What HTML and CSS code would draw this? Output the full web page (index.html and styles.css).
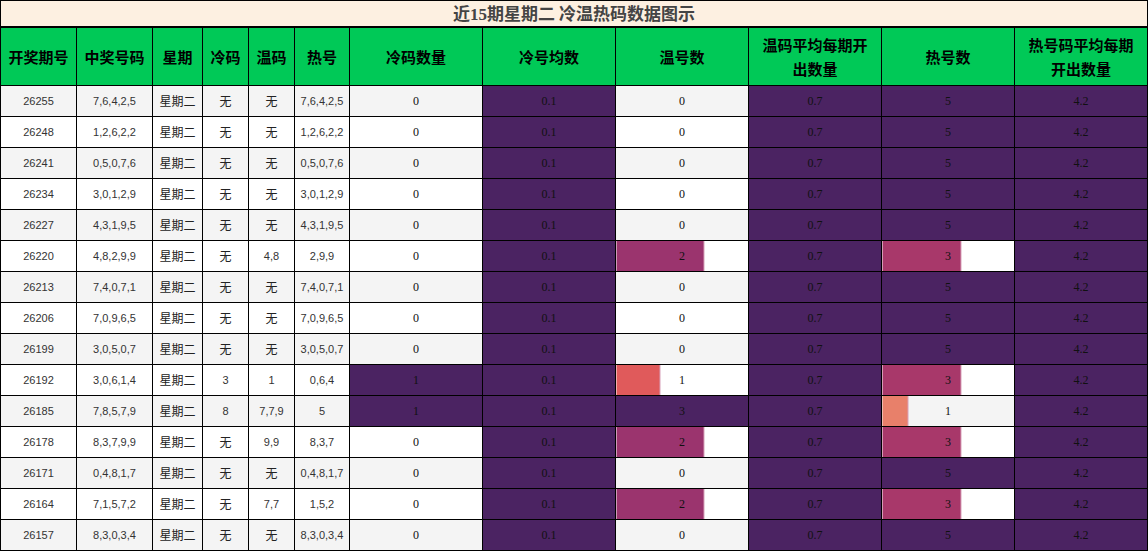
FILE: index.html
```html
<!DOCTYPE html>
<html lang="zh">
<head>
<meta charset="utf-8">
<title>近15期星期二 冷温热码数据图示</title>
<link rel="stylesheet" href="styles.css">
</head>
<body>
<table class="grid">
  <colgroup>
    <col class="c76"><col class="c76"><col class="c50"><col class="c46"><col class="c46"><col class="c55">
    <col class="c133"><col class="c133"><col class="c133"><col class="c133"><col class="c133"><col class="c133">
  </colgroup>
  <thead>
    <tr class="title-row"><th colspan="12" class="title"><span class="ser">近15</span>期星期二 冷温热码数据图示</th></tr>
    <tr class="head-row">
      <th>开奖期号</th><th>中奖号码</th><th>星期</th><th>冷码</th><th>温码</th><th>热号</th>
      <th class="wide">冷码数量</th><th class="wide">冷号均数</th><th class="wide">温号数</th><th class="wide">温码平均每期开出数量</th><th class="wide">热号数</th><th class="wide">热号码平均每期开出数量</th>
    </tr>
  </thead>
  <tbody>
    <tr class="odd"><td>26255</td><td>7,6,4,2,5</td><td class="cjk">星期二</td><td class="cjk">无</td><td class="cjk">无</td><td>7,6,4,2,5</td><td class="num">0</td><td class="num pur">0.1</td><td class="num">0</td><td class="num pur">0.7</td><td class="num pur">5</td><td class="num pur">4.2</td></tr>
    <tr><td>26248</td><td>1,2,6,2,2</td><td class="cjk">星期二</td><td class="cjk">无</td><td class="cjk">无</td><td>1,2,6,2,2</td><td class="num">0</td><td class="num pur">0.1</td><td class="num">0</td><td class="num pur">0.7</td><td class="num pur">5</td><td class="num pur">4.2</td></tr>
    <tr class="odd"><td>26241</td><td>0,5,0,7,6</td><td class="cjk">星期二</td><td class="cjk">无</td><td class="cjk">无</td><td>0,5,0,7,6</td><td class="num">0</td><td class="num pur">0.1</td><td class="num">0</td><td class="num pur">0.7</td><td class="num pur">5</td><td class="num pur">4.2</td></tr>
    <tr><td>26234</td><td>3,0,1,2,9</td><td class="cjk">星期二</td><td class="cjk">无</td><td class="cjk">无</td><td>3,0,1,2,9</td><td class="num">0</td><td class="num pur">0.1</td><td class="num">0</td><td class="num pur">0.7</td><td class="num pur">5</td><td class="num pur">4.2</td></tr>
    <tr class="odd"><td>26227</td><td>4,3,1,9,5</td><td class="cjk">星期二</td><td class="cjk">无</td><td class="cjk">无</td><td>4,3,1,9,5</td><td class="num">0</td><td class="num pur">0.1</td><td class="num">0</td><td class="num pur">0.7</td><td class="num pur">5</td><td class="num pur">4.2</td></tr>
    <tr><td>26220</td><td>4,8,2,9,9</td><td class="cjk">星期二</td><td class="cjk">无</td><td>4,8</td><td>2,9,9</td><td class="num">0</td><td class="num pur">0.1</td><td class="num bar" style="--w:66.67%;--c:#9b346e">2</td><td class="num pur">0.7</td><td class="num bar" style="--w:60%;--c:#a8386a">3</td><td class="num pur">4.2</td></tr>
    <tr class="odd"><td>26213</td><td>7,4,0,7,1</td><td class="cjk">星期二</td><td class="cjk">无</td><td class="cjk">无</td><td>7,4,0,7,1</td><td class="num">0</td><td class="num pur">0.1</td><td class="num">0</td><td class="num pur">0.7</td><td class="num pur">5</td><td class="num pur">4.2</td></tr>
    <tr><td>26206</td><td>7,0,9,6,5</td><td class="cjk">星期二</td><td class="cjk">无</td><td class="cjk">无</td><td>7,0,9,6,5</td><td class="num">0</td><td class="num pur">0.1</td><td class="num">0</td><td class="num pur">0.7</td><td class="num pur">5</td><td class="num pur">4.2</td></tr>
    <tr class="odd"><td>26199</td><td>3,0,5,0,7</td><td class="cjk">星期二</td><td class="cjk">无</td><td class="cjk">无</td><td>3,0,5,0,7</td><td class="num">0</td><td class="num pur">0.1</td><td class="num">0</td><td class="num pur">0.7</td><td class="num pur">5</td><td class="num pur">4.2</td></tr>
    <tr><td>26192</td><td>3,0,6,1,4</td><td class="cjk">星期二</td><td>3</td><td>1</td><td>0,6,4</td><td class="num pur">1</td><td class="num pur">0.1</td><td class="num bar" style="--w:33.33%;--c:#e05a5b">1</td><td class="num pur">0.7</td><td class="num bar" style="--w:60%;--c:#a8386a">3</td><td class="num pur">4.2</td></tr>
    <tr class="odd"><td>26185</td><td>7,8,5,7,9</td><td class="cjk">星期二</td><td>8</td><td>7,7,9</td><td>5</td><td class="num pur">1</td><td class="num pur">0.1</td><td class="num pur">3</td><td class="num pur">0.7</td><td class="num bar" style="--w:20%;--c:#e8806a">1</td><td class="num pur">4.2</td></tr>
    <tr><td>26178</td><td>8,3,7,9,9</td><td class="cjk">星期二</td><td class="cjk">无</td><td>9,9</td><td>8,3,7</td><td class="num">0</td><td class="num pur">0.1</td><td class="num bar" style="--w:66.67%;--c:#9b346e">2</td><td class="num pur">0.7</td><td class="num bar" style="--w:60%;--c:#a8386a">3</td><td class="num pur">4.2</td></tr>
    <tr class="odd"><td>26171</td><td>0,4,8,1,7</td><td class="cjk">星期二</td><td class="cjk">无</td><td class="cjk">无</td><td>0,4,8,1,7</td><td class="num">0</td><td class="num pur">0.1</td><td class="num">0</td><td class="num pur">0.7</td><td class="num pur">5</td><td class="num pur">4.2</td></tr>
    <tr><td>26164</td><td>7,1,5,7,2</td><td class="cjk">星期二</td><td class="cjk">无</td><td>7,7</td><td>1,5,2</td><td class="num">0</td><td class="num pur">0.1</td><td class="num bar" style="--w:66.67%;--c:#9b346e">2</td><td class="num pur">0.7</td><td class="num bar" style="--w:60%;--c:#a8386a">3</td><td class="num pur">4.2</td></tr>
    <tr class="odd"><td>26157</td><td>8,3,0,3,4</td><td class="cjk">星期二</td><td class="cjk">无</td><td class="cjk">无</td><td>8,3,0,3,4</td><td class="num">0</td><td class="num pur">0.1</td><td class="num">0</td><td class="num pur">0.7</td><td class="num pur">5</td><td class="num pur">4.2</td></tr>
  </tbody>
</table>
</body>
</html>
```
FILE: styles.css
```css
html, body {
  margin: 0;
  padding: 0;
  background: #ffffff;
}
body {
  font-family: "Liberation Sans", "Noto Sans CJK SC", sans-serif;
  color: #222;
}
.grid {
  border-collapse: collapse;
  table-layout: fixed;
  width: 1148px;
}
.c76 { width: 76px; }
.c50 { width: 50px; }
.c46 { width: 46px; }
.c55 { width: 55px; }
.c133 { width: 133px; }

.grid th, .grid td {
  border: 1px solid #000;
  padding: 0;
  text-align: center;
  vertical-align: middle;
  overflow: hidden;
  white-space: nowrap;
}
.title-row th {
  height: 25px;
  background: #fdf0e1;
  border-bottom: 2px solid #000;
  font-family: "Noto Sans CJK SC", sans-serif;
  font-weight: bold;
  font-size: 17px;
  line-height: 22px;
  color: #444;
}
.title .ser {
  font-family: "Liberation Serif", "Noto Sans CJK SC", serif;
}
.head-row th {
  height: 57px;
  background: #00c957;
  color: #000;
  font-family: "Noto Sans CJK SC", sans-serif;
  font-weight: bold;
  font-size: 15px;
  line-height: 24px;
  padding: 0;
}
.head-row th.wide {
  white-space: normal;
  padding: 0 12px;
}
tbody tr { background: #ffffff; }
tbody tr.odd { background: #f4f4f4; }
tbody td {
  height: 30px;
  font-size: 11px;
  line-height: 16px;
  color: #333;
}
tbody td.cjk {
  font-family: "Noto Sans CJK SC", sans-serif;
  font-size: 12px;
  color: #222;
}
tbody td.num {
  font-family: "Liberation Serif", serif;
  font-size: 12px;
  color: #111;
}
tbody td.pur {
  background: #4b2362;
  color: #111;
}
tbody td.bar {
  background: linear-gradient(to right,
    var(--c) 0,
    var(--c) calc(var(--w) - 1px),
    #d7a0b8 calc(var(--w) - 1px),
    #d7a0b8 var(--w),
    transparent var(--w));
  color: #111;
}
```
